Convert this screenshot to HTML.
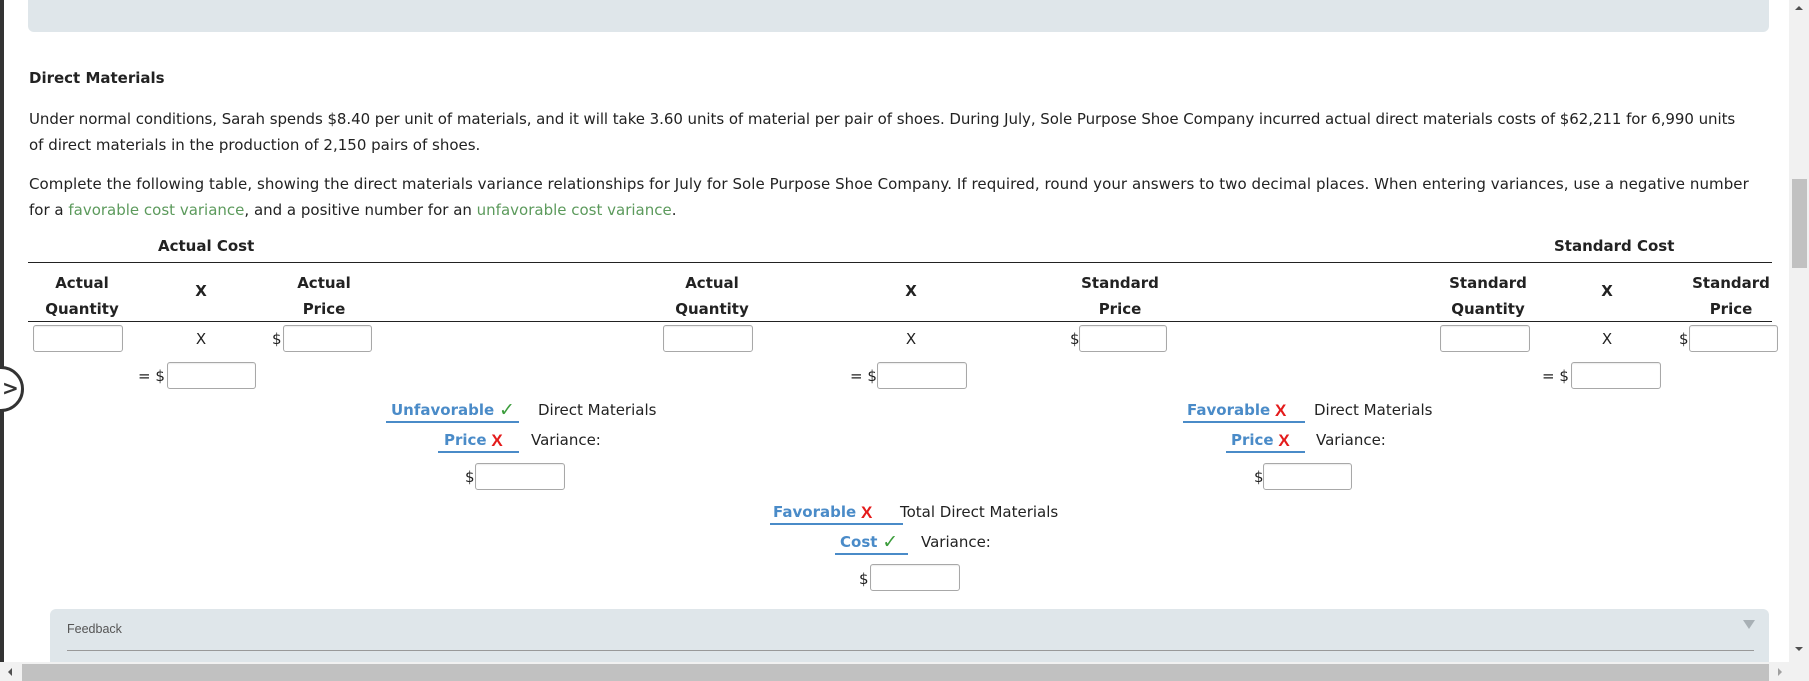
<!DOCTYPE html>
<html><head><meta charset="utf-8"><style>
*{margin:0;padding:0;box-sizing:border-box}
body{width:1809px;height:681px;overflow:hidden;background:#fff;position:relative;font-family:"DejaVu Sans",Verdana,sans-serif;font-size:15px;color:#222}
.a{position:absolute;white-space:nowrap;line-height:1}
.b{font-weight:bold}
.c{transform:translateX(-50%);text-align:center}
.in{position:absolute;height:27px;border:1px solid #a8a8a8;border-radius:3px;background:#fff;box-shadow:inset 0 1px 1px rgba(0,0,0,.08)}
.bl{color:#4a8bc8;font-weight:bold}
.ok{color:#3c9d3c;font-weight:bold;font-size:19px;line-height:15px;display:inline-block;vertical-align:top}
.no{color:#e41b1b;font-weight:bold;font-family:"Liberation Sans",sans-serif;font-size:17px;line-height:15px;display:inline-block;vertical-align:top}
.ul{position:absolute;height:2px;background:#4a8bc8}
.hl{position:absolute;height:1px;background:#222;left:28px;width:1744px}
</style></head><body>
<div style="position:absolute;left:28px;top:0;width:1741px;height:32px;background:#dfe6ea;border-radius:0 0 6px 6px"></div>
<div style="position:absolute;left:0;top:0;width:4px;height:662px;background:#333"></div>
<div style="position:absolute;left:-22px;top:366px;width:46px;height:46px;border:3px solid #333;border-radius:50%;background:#fff"></div>
<div class="a" style="left:2px;top:378px;font-size:20px;color:#333;font-weight:bold">&gt;</div>

<div class="a b" style="left:29px;top:71px">Direct Materials</div>
<div class="a" style="left:29px;top:112px;letter-spacing:-.06px">Under normal conditions, Sarah spends $8.40 per unit of materials, and it will take 3.60 units of material per pair of shoes. During July, Sole Purpose Shoe Company incurred actual direct materials costs of $62,211 for 6,990 units</div>
<div class="a" style="left:29px;top:138px">of direct materials in the production of 2,150 pairs of shoes.</div>
<div class="a" style="left:29px;top:177px;letter-spacing:.06px">Complete the following table, showing the direct materials variance relationships for July for Sole Purpose Shoe Company. If required, round your answers to two decimal places. When entering variances, use a negative number</div>
<div class="a" style="left:29px;top:203px">for a <span style="color:#5c9a5c">favorable cost variance</span>, and a positive number for an <span style="color:#5c9a5c">unfavorable cost variance</span>.</div>

<div class="a b" style="left:158px;top:239px">Actual Cost</div>
<div class="a b" style="left:1554px;top:239px">Standard Cost</div>
<div class="hl" style="top:262px"></div>
<div class="hl" style="top:321px"></div>

<div class="a b c" style="left:82px;top:270px;line-height:26px">Actual<br>Quantity</div>
<div class="a b c" style="left:201px;top:284px">X</div>
<div class="a b c" style="left:324px;top:270px;line-height:26px">Actual<br>Price</div>
<div class="a b c" style="left:712px;top:270px;line-height:26px">Actual<br>Quantity</div>
<div class="a b c" style="left:911px;top:284px">X</div>
<div class="a b c" style="left:1120px;top:270px;line-height:26px">Standard<br>Price</div>
<div class="a b c" style="left:1488px;top:270px;line-height:26px">Standard<br>Quantity</div>
<div class="a b c" style="left:1607px;top:284px">X</div>
<div class="a b c" style="left:1731px;top:270px;line-height:26px">Standard<br>Price</div>

<div class="in" style="left:33px;top:325px;width:90px"></div>
<div class="a c" style="left:201px;top:332px">X</div>
<div class="a" style="left:272px;top:332px">$</div>
<div class="in" style="left:283px;top:325px;width:89px"></div>
<div class="in" style="left:663px;top:325px;width:90px"></div>
<div class="a c" style="left:911px;top:332px">X</div>
<div class="a" style="left:1070px;top:332px">$</div>
<div class="in" style="left:1079px;top:325px;width:88px"></div>
<div class="in" style="left:1440px;top:325px;width:90px"></div>
<div class="a c" style="left:1607px;top:332px">X</div>
<div class="a" style="left:1679px;top:332px">$</div>
<div class="in" style="left:1689px;top:325px;width:89px"></div>

<div class="a" style="left:138px;top:369px">= $</div>
<div class="in" style="left:167px;top:362px;width:89px"></div>
<div class="a" style="left:850px;top:369px">= $</div>
<div class="in" style="left:877px;top:362px;width:90px"></div>
<div class="a" style="left:1542px;top:369px">= $</div>
<div class="in" style="left:1571px;top:362px;width:90px"></div>

<!-- left variance -->
<div class="a" style="left:391px;top:403px"><span class="bl">Unfavorable</span> <span class="ok">✓</span></div>
<div class="ul" style="left:386px;top:421px;width:133px"></div>
<div class="a" style="left:538px;top:403px">Direct Materials</div>
<div class="a" style="left:444px;top:433px"><span class="bl">Price</span> <span class="no">X</span></div>
<div class="ul" style="left:438px;top:451px;width:81px"></div>
<div class="a" style="left:531px;top:433px">Variance:</div>
<div class="a" style="left:465px;top:470px">$</div>
<div class="in" style="left:475px;top:463px;width:90px"></div>

<!-- right variance -->
<div class="a" style="left:1187px;top:403px"><span class="bl">Favorable</span> <span class="no">X</span></div>
<div class="ul" style="left:1183px;top:421px;width:122px"></div>
<div class="a" style="left:1314px;top:403px">Direct Materials</div>
<div class="a" style="left:1231px;top:433px"><span class="bl">Price</span> <span class="no">X</span></div>
<div class="ul" style="left:1226px;top:451px;width:79px"></div>
<div class="a" style="left:1316px;top:433px">Variance:</div>
<div class="a" style="left:1254px;top:470px">$</div>
<div class="in" style="left:1263px;top:463px;width:89px"></div>

<!-- total -->
<div class="a" style="left:773px;top:505px"><span class="bl">Favorable</span> <span class="no">X</span></div>
<div class="ul" style="left:770px;top:523px;width:133px"></div>
<div class="a" style="left:900px;top:505px">Total Direct Materials</div>
<div class="a" style="left:840px;top:535px"><span class="bl">Cost</span> <span class="ok">✓</span></div>
<div class="ul" style="left:835px;top:553px;width:73px"></div>
<div class="a" style="left:921px;top:535px">Variance:</div>
<div class="a" style="left:859px;top:572px">$</div>
<div class="in" style="left:870px;top:564px;width:90px"></div>

<!-- feedback -->
<div style="position:absolute;left:50px;top:609px;width:1719px;height:60px;background:#dfe6ea;border-radius:6px 6px 0 0"></div>
<div class="a" style="left:67px;top:623px;font-family:'Liberation Sans',sans-serif;font-size:12.5px;color:#555">Feedback</div>
<div style="position:absolute;left:67px;top:650px;width:1687px;height:1px;background:#999"></div>
<div style="position:absolute;left:1743px;top:620px;width:0;height:0;border-left:6px solid transparent;border-right:6px solid transparent;border-top:9px solid #a8b0b5"></div>

<!-- scrollbars -->
<div style="position:absolute;left:1789px;top:0;width:20px;height:662px;background:#f1f1f1"></div>
<div style="position:absolute;left:1792px;top:179px;width:15px;height:89px;background:#c1c1c1"></div>
<div style="position:absolute;left:1795px;top:6px;border-left:4px solid transparent;border-right:4px solid transparent;border-bottom:4px solid #505050"></div>
<div style="position:absolute;left:1795px;top:647px;border-left:4px solid transparent;border-right:4px solid transparent;border-top:4px solid #505050"></div>
<div style="position:absolute;left:0;top:662px;width:1809px;height:19px;background:#f1f1f1"></div>
<div style="position:absolute;left:22px;top:664px;width:1747px;height:17px;background:#c1c1c1"></div>
<div style="position:absolute;left:8px;top:668px;border-top:4px solid transparent;border-bottom:4px solid transparent;border-right:4px solid #505050"></div>
<div style="position:absolute;left:1778px;top:668px;border-top:4px solid transparent;border-bottom:4px solid transparent;border-left:4px solid #a0a0a0"></div>
</body></html>
